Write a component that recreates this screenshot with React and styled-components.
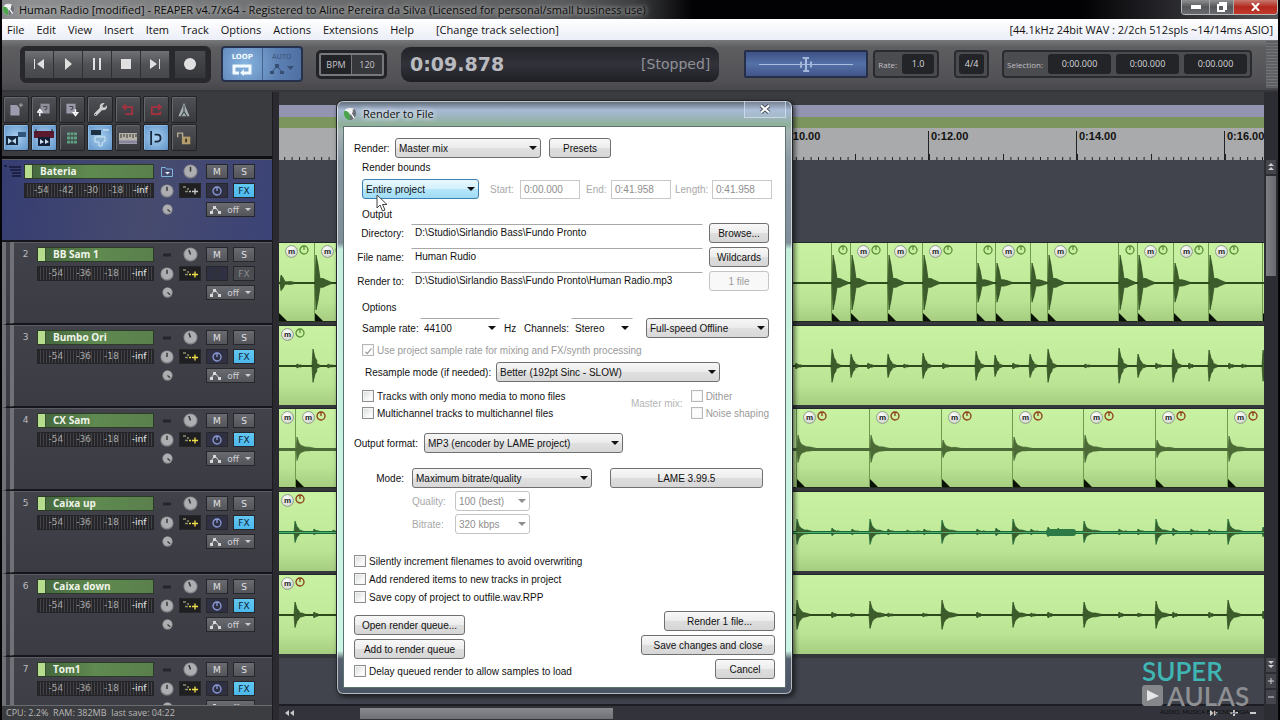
import styled, { createGlobalStyle, css } from "styled-components";
import { FaWrench } from "react-icons/fa";

const uiFont = `"Open Sans", "Noto Sans", sans-serif`;
const dialogFont = `"Liberation Sans", Arial, sans-serif`;
const meterFont = `"DejaVu Sans", sans-serif`;

const menuItems = ["File", "Edit", "View", "Insert", "Item", "Track", "Options", "Actions", "Extensions", "Help", "[Change track selection]"];

const tracks = [
  { name: "Bateria", folder: true },
  { no: 2, name: "BB Sam 1", fxOff: true },
  { no: 3, name: "Bumbo Ori" },
  { no: 4, name: "CX Sam" },
  { no: 5, name: "Caixa up" },
  { no: 6, name: "Caixa down" },
  { no: 7, name: "Tom1" },
];

const timeMarks = ["0:04.00", "0:06.00", "0:08.00", "0:10.00", "0:12.00", "0:14.00", "0:16.00"];

// clip starts, in pixels from the left of the arrange view
const kickClips = [0, 35, 552, 571, 608, 643, 697, 716, 751, 768, 839, 858, 894, 929, 983];
const snareClips = [0, 16, 517, 590, 662, 733, 804, 876, 948];

// [x, height, tail length]
const softKicks = [697, 716, 751, 894];
const kickHits = [[1, 8, 14], ...kickClips.slice(1, 14).map((x) => [x + 1, softKicks.includes(x) ? 20 : 28, 15])];
const bassHits = [
  [17, 2, 4], [33, 17, 6], [48, 2, 5], [516, 3, 6], [552, 17, 8], [571, 12, 7], [588, 3, 5], [608, 12, 8],
  [624, 2, 4], [643, 13, 8], [663, 3, 6], [696, 15, 8], [715, 11, 7], [733, 3, 6], [750, 12, 7], [768, 17, 8],
  [805, 2, 5], [839, 18, 8], [858, 12, 8], [876, 3, 6], [893, 17, 8], [909, 3, 4], [929, 16, 8], [949, 3, 5],
  [962, 2, 4], [983, 16, 5],
];
const snareHits = snareClips.slice(1).map((x, i) => [x + 1, [12, 14, 14, 9, 12, 14, 9, 13][i], 19]);
const caixaUpHits = [
  [15, 11, 8], [34, 3, 5], [53, 2, 12], [517, 13, 16], [552, 4, 8], [572, 3, 7], [590, 13, 14], [608, 3, 6],
  [627, 2, 16], [644, 3, 7], [662, 12, 16], [697, 3, 9], [716, 4, 4], [733, 13, 14], [751, 3, 8], [768, 5, 32],
  [778, 4, 20], [804, 11, 18], [839, 3, 9], [858, 3, 6], [876, 13, 14], [893, 4, 5], [911, 3, 8], [929, 3, 8],
  [948, 13, 16], [983, 5, 4],
];
const caixaDownHits = [
  [15, 13, 10], [34, 3, 3], [517, 15, 13], [552, 3, 4], [571, 2, 3], [590, 14, 16], [608, 2, 5], [643, 2, 4],
  [662, 15, 16], [697, 3, 3], [733, 13, 14], [751, 2, 4], [768, 3, 4], [804, 13, 18], [839, 3, 4], [858, 2, 3],
  [876, 14, 13], [893, 3, 4], [929, 3, 4], [948, 15, 13], [983, 4, 3],
];

const lanes = [
  { starts: kickClips, hits: kickHits, power: "#5b8f35", fades: true, sharp: true },
  { starts: [0], hits: bassHits, power: "#5b8f35" },
  { starts: snareClips, hits: snareHits, power: "#8c3c14", fades: true, soft: true },
  { starts: [0], hits: caixaUpHits, power: "#8c3c14", stroke: "#17693a", core: "#4fae6c" },
  { starts: [0], hits: caixaDownHits, power: "#8c3c14" },
];

function hitPath([x, h, tail], sharp) {
  const knee = sharp ? [0.66, 0.16] : [0.5, 0.3];
  const top = [
    [0, 0], [1, h], [3, h * knee[0]], [5, h * knee[1]], [tail * 0.4 + 2, h * 0.16], [tail * 0.6 + 2, h * 0.07 + 1], [tail + 3, 0],
  ];
  const up = top.map(([dx, dy]) => `${x + dx},${40 - dy}`);
  const down = [...top].reverse().map(([dx, dy]) => `${x + dx},${40 + dy * 0.96}`);
  return `M${up.join("L")}L${down.join("L")}Z`;
}

function Wave({ hits, sharp, soft, core, stroke = "#2c4a1c" }) {
  return (
    <WaveSvg aria-hidden="true">
      <rect x="0" y="39" width="100%" height={soft || core ? 3 : 2} fill={soft ? "#4b6a38" : stroke} />
      {hits.map((hit, idx) => (
        <path key={idx} d={hitPath(hit, sharp)} fill={soft ? "#4b6a35" : "#3d5c2c"} stroke={soft ? "#4b6a35" : stroke} strokeWidth="0.7" />
      ))}
      {core && <rect x="0" y="40" width="100%" height="1" fill={core} />}
      {core && <rect x="767" y="37" width="30" height="7" rx="3" fill="#2c7a45" />}
    </WaveSvg>
  );
}

function Power({ color }) {
  return (
    <svg width="10" height="10" viewBox="0 0 10 10" fill="none" stroke={color} strokeWidth="1.3">
      <circle cx="5" cy="5" r="4" />
      <path d="M5 1V5" />
    </svg>
  );
}

function Lane({ starts, hits, power, fades, ...wave }) {
  return (
    <LaneRow>
      {starts.map((start, idx) => {
        const width = starts[idx + 1] ? starts[idx + 1] - start : 0;
        const tiny = (width && width < 18) || start > 970;
        const narrow = width && width < 24;
        const lone = fades && idx === 0 && wave.soft;
        return (
          <Clip key={start} $width={width} $fade={fades} $first={idx === 0} $tight={lone}>
            {(lone || (!narrow && !tiny)) && <MuteBadge>m</MuteBadge>}
            {!tiny && <Power color={power} />}
          </Clip>
        );
      })}
      <Wave hits={hits} {...wave} />
    </LaneRow>
  );
}

function ReaperLogo({ size }) {
  return (
    <svg width={size} height={size} viewBox="0 0 16 16" aria-hidden="true">
      <path d="M8 1C4 1 1 3 1 7c0 5 4 8 7 8s7-3 7-8c0-4-3-6-7-6z" fill="#e8eaea" />
      <path d="M1 7c0 5 4 8 7 8V9C7 6 4 4 2 4 1 5 1 6 1 7z" fill="#4ca54e" />
      <path d="M8 15c3 0 7-3 7-8 0-2-1-4-2-5-3 2-4 5-5 8z" fill="#6d7079" />
      <path d="M3 4h6c2 0 2 2 0 3l4 6" fill="none" stroke="#fff" strokeWidth="1.4" />
    </svg>
  );
}

function Knob({ size, angle = 0 }) {
  return (
    <svg width={size} height={size} viewBox="0 0 16 16" aria-hidden="true">
      <circle cx="8" cy="8" r="7.5" fill="#85868a" />
      <circle cx="8" cy="7.6" r="6.4" fill="#adaeb1" />
      <path d="M8 3v5" stroke="#333" strokeWidth="1.6" transform={`rotate(${angle} 8 8)`} />
    </svg>
  );
}

function EnvelopeIcon() {
  return (
    <svg width="11" height="8" viewBox="0 0 11 8" fill="none" stroke="#d8d8d8" strokeWidth="1">
      <path d="M1 6L4 2H6L9 6" />
      <path d="M0 5h3v3H0zM3 0h3v3H3zM8 5h3v3H8z" fill="#d8d8d8" stroke="none" />
    </svg>
  );
}

function Track({ no, name, folder, fxOff }) {
  const marks = folder ? ["-54", "-42", "-30", "-18", "-inf"] : ["-54", "-36", "-18", "-inf"];
  return (
    <TrackRow $folder={folder}>
      <TrackNo $folder={folder}>
        {folder ? (
          <svg width="18" height="14" viewBox="0 0 18 14" fill="none" stroke="#1c2145" strokeWidth="2">
            <path d="M0 2h3M5 3h12M6 6h11M8 9h9M8 12h9" />
          </svg>
        ) : no}
      </TrackNo>
      <TrackMain>
        <TrackName>{name}</TrackName>
        <Meter $cols={marks.length}>
          {marks.map((mark) => <MeterMark key={mark} $bright={mark === "-inf"}>{mark}</MeterMark>)}
        </Meter>
      </TrackMain>
      <TrackControls>
        {folder ? (
          <svg width="14" height="12" viewBox="0 0 14 12" fill="none" stroke="#7fb4d8">
            <path d="M1.500 1.500h4l1 1.500h6v7.500h-11z" />
            <path d="M5 6h5l-2.500 2.500z" fill="#dfeefa" stroke="none" />
          </svg>
        ) : (
          <svg width="10" height="4" viewBox="0 0 10 4"><path d="M1 2h8" stroke="#26262a" strokeWidth="3" /></svg>
        )}
        <Knob size={15} angle={folder ? 0 : -20} />
        <TrackBtn>M</TrackBtn>
        <TrackBtn>S</TrackBtn>
        <Knob size={14} angle={0} />
        <TrackBtn $tone="route" aria-label="Routing">
          <svg width="17" height="9" viewBox="0 0 17 9" fill="none" stroke={folder ? "#c9c9c9" : "#f0e04a"} strokeWidth="1.300">
            <path d="M1 1h3M5 3h2M3 5.500h3" stroke="#8d8d70" />
            <path d="M7 5.500h2M10 5.500h6M13 2.500v6" />
          </svg>
        </TrackBtn>
        <TrackBtn $tone="power" aria-label="Bypass">
          {fxOff ? <Power color="#33343a" /> : <Power color="#8d9ddb" />}
        </TrackBtn>
        <TrackBtn $tone={fxOff ? "fxOff" : "fx"}>FX</TrackBtn>
        <Knob size={11} angle={130} />
        <i />
        <OffBtn>
          <EnvelopeIcon />
          off
          <Caret $small />
        </OffBtn>
      </TrackControls>
    </TrackRow>
  );
}

const toolIcons = [
  { name: "New project", art: <><path d="M2 3h9l4 4v11H2z" fill="#9c9cae" /><path d="M17 0v6M14 3h6" stroke="#ccc" /></> },
  { name: "Open project", art: <><path d="M5 1h13v14H5z" fill="#8f909c" /><path d="M9 5h5v3l-3 2" stroke="#44454d" strokeWidth="1.500" /><path d="M4 19v-6M1 13l3-4 3 4z" stroke="#fff" strokeWidth="2" /></> },
  { name: "Save project", art: <><path d="M2 1h13v14H2z" fill="#9b9aab" /><path d="M6 5h5v3l-3 2" stroke="#44454d" strokeWidth="1.500" /><path d="M15 9v6M12 14l3 4 3-4z" stroke="#fff" strokeWidth="2" /></> },
  { name: "Settings", wrench: true },
  { name: "Undo", art: <path d="M7 2L3 6l4 4M3 6h13v10H6" stroke="#a8323f" strokeWidth="2.500" /> },
  { name: "Redo", art: <path d="M13 2l4 4-4 4M17 6H4v10h12v-4" stroke="#a8323f" strokeWidth="2.500" /> },
  { name: "Metronome", art: <><path d="M10 0l8 19H2z" fill="#a5aeb1" /><path d="M10 4v8M6 19l4-7 4 7" stroke="#3e4648" strokeWidth="1.500" /></> },
  { name: "Auto crossfade", on: true, big: true, art: <><path d="M0 8h12v9H0z" fill="#16283f" /><path d="M12 4h8v5h-8z" fill="#31567d" /><path d="M2 10l4 3-4 3zM10 10l-4 3 4 3z" fill="#bcd8ee" /></> },
  { name: "Item grouping", on: true, big: true, art: <><path d="M0 3h20v7H0z" fill="#5b1a2e" /><path d="M4 9h12v9H4z" fill="#142038" /><path d="M6 11l4 3-4 2zM11 11l4 3-4 2z" fill="#cfe0f0" /><path d="M2 1v4M18 1v4" stroke="#222" /></> },
  { name: "Grid", art: <path d="M3 4h14M3 10h14M3 16h14" stroke="#5fa585" strokeWidth="4" strokeDasharray="4 1" /> },
  { name: "Ripple editing", on: true, big: true, art: <><path d="M1 2h10v5H1z" fill="#1d3145" /><path d="M13 2h6" stroke="#e6f2fc" /><path d="M5 9h10v4l-3 2v3H9v-4H5z" stroke="#cfe6f8" fill="#8bb6d6" /></> },
  { name: "Ruler", big: true, art: <><path d="M1 5h18v11H1z" fill="#b5b3a8" /><path d="M3 6v4M6 6v3M9 6v4M12 6v3M15 6v4M18 6v3" stroke="#333" /><path d="M1 14h18" stroke="#8784a0" strokeWidth="3" /></> },
  { name: "Snap", on: true, art: <path d="M3 0v20M8 5h4c6 0 6 10 0 10H8" stroke="#16283f" strokeWidth="2.500" /> },
  { name: "Lock", art: <><path d="M7 8h12v11H7z" fill="#b39b6c" /><path d="M1 9V3h7v6" stroke="#b5aa92" strokeWidth="2" /><path d="M13 11v5" stroke="#3c3220" strokeWidth="2.500" /></> },
];

function SelectBox({ id, value, ...rest }) {
  return (
    <SelectWrap {...rest}>
      <Select id={id} disabled={rest.$off} defaultValue={value} aria-label={id ? undefined : value}>
        <option>{value}</option>
      </Select>
      <Caret />
    </SelectWrap>
  );
}

function Check({ label, disabled, checked }) {
  return (
    <CheckLabel $off={disabled}>
      <CheckInput type="checkbox" disabled={disabled} defaultChecked={checked} />
      {label}
    </CheckLabel>
  );
}

function RenderDialog() {
  return (
    <DialogFrame role="dialog" aria-label="Render to File">
      <DialogTitle>
        <ReaperLogo size={14} />
        <span>Render to File</span>
        <DialogClose aria-label="Close">
          <svg width="12" height="10" viewBox="0 0 12 10" fill="none">
            <path d="M2 1.500l8 7M10 1.500l-8 7" stroke="#4a5160" strokeWidth="4" />
            <path d="M2 1.500l8 7M10 1.500l-8 7" stroke="#fff" strokeWidth="2" />
          </svg>
        </DialogClose>
      </DialogTitle>
      <DialogBody>
        <Row>
          <Label htmlFor="source" $width={41}>Render:</Label>
          <SelectBox id="source" value="Master mix" $width={146} />
          <Button $width={62} $push={8}>Presets</Button>
        </Row>
        <Group $top={2}>
          <Legend $space={3}>Render bounds</Legend>
          <Row>
            <SelectBox value="Entire project" $width={117} $hot />
            <Label htmlFor="start" $off $width={30} $push={11}>Start:</Label>
            <Input id="start" defaultValue="0:00.000" disabled $width={60} />
            <Label htmlFor="end" $off $width={25} $push={6}>End:</Label>
            <Input id="end" defaultValue="0:41.958" disabled $width={60} />
            <Label htmlFor="length" $off $width={37} $push={4}>Length:</Label>
            <Input id="length" defaultValue="0:41.958" disabled $width={60} />
          </Row>
        </Group>
        <Group $top={8}>
          <Legend>Output</Legend>
          <Rows>
            <Row>
              <Label htmlFor="dir" $end $width={42}>Directory:</Label>
              <Input id="dir" defaultValue="D:\Studio\Sirlandio Bass\Fundo Pronto" $line />
              <Button $width={60} $push={6}>Browse...</Button>
            </Row>
            <Row>
              <Label htmlFor="file" $end $width={42}>File name:</Label>
              <Input id="file" defaultValue="Human Rudio" $line />
              <Button $width={60} $push={6}>Wildcards</Button>
            </Row>
            <Row>
              <Label htmlFor="target" $end $width={42}>Render to:</Label>
              <Input id="target" defaultValue="D:\Studio\Sirlandio Bass\Fundo Pronto\Human Radio.mp3" $line />
              <Button $width={60} $push={6} disabled>1 file</Button>
            </Row>
          </Rows>
        </Group>
        <Group $top={9}>
          <Legend $space={2}>Options</Legend>
          <Rows>
            <Row>
              <Label htmlFor="rate" $width={58}>Sample rate:</Label>
              <SelectBox id="rate" value="44100" $width={80} $bare />
              <Label $width={20} $push={4}>Hz</Label>
              <Label htmlFor="channels" $width={47}>Channels:</Label>
              <SelectBox id="channels" value="Stereo" $width={62} $bare />
              <SelectBox value="Full-speed Offline" $width={123} $last />
            </Row>
            <Check label="Use project sample rate for mixing and FX/synth processing" disabled checked />
            <Row>
              <Label htmlFor="resample" $width={134} $indent={3}>Resample mode (if needed):</Label>
              <SelectBox id="resample" value="Better (192pt Sinc - SLOW)" $width={224} />
            </Row>
            <SplitRow>
              <Checks $gap={1}>
                <Check label="Tracks with only mono media to mono files" />
                <Check label="Multichannel tracks to multichannel files" />
              </Checks>
              <MasterMix>Master mix:</MasterMix>
              <Checks $gap={1}>
                <Check label="Dither" disabled />
                <Check label="Noise shaping" disabled />
              </Checks>
            </SplitRow>
          </Rows>
        </Group>
        <Row $top={12}>
          <Label htmlFor="format" $width={70}>Output format:</Label>
          <SelectBox id="format" value="MP3 (encoder by LAME project)" $width={199} />
        </Row>
        <FormatGroup>
          <Row>
            <Label htmlFor="mode" $end $width={42}>Mode:</Label>
            <SelectBox id="mode" value="Maximum bitrate/quality" $width={180} />
            <Button $width={153} $push={18}>LAME 3.99.5</Button>
          </Row>
          <Row>
            <Label htmlFor="quality" $off $width={42} $push={50}>Quality:</Label>
            <SelectBox id="quality" value="100 (best)" $width={75} $off />
          </Row>
          <Row>
            <Label htmlFor="bitrate" $off $width={42} $push={50}>Bitrate:</Label>
            <SelectBox id="bitrate" value="320 kbps" $width={75} $off />
          </Row>
        </FormatGroup>
        <Checks $gap={2} $top={19}>
          <Check label="Silently increment filenames to avoid overwriting" />
          <Check label="Add rendered items to new tracks in project" />
          <Check label="Save copy of project to outfile.wav.RPP" />
        </Checks>
        <DialogFooter>
          <Rows>
            <Button $width={111}>Open render queue...</Button>
            <Button $width={111}>Add to render queue</Button>
            <Check label="Delay queued render to allow samples to load" />
          </Rows>
          <Rows $end>
            <Button $width={111}>Render 1 file...</Button>
            <Button $width={134}>Save changes and close</Button>
            <Button $width={60}>Cancel</Button>
          </Rows>
        </DialogFooter>
      </DialogBody>
      <Cursor width="12" height="18" viewBox="0 0 12 18">
        <path d="M1 1v13l3-3 2.500 6 2.500-1-2.500-5.500H11z" fill="#fff" stroke="#444" strokeWidth="1" />
      </Cursor>
    </DialogFrame>
  );
}

function Transport() {
  return (
    <TransportBar>
      <Deck>
        <DeckBtn aria-label="Go to start"><svg width="16" height="12"><path d="M3 1h1v10H3zM13 1v10L6 6z" /></svg></DeckBtn>
        <DeckBtn aria-label="Play"><svg width="12" height="12"><path d="M3 0l7 6-7 6z" /></svg></DeckBtn>
        <DeckBtn aria-label="Pause"><svg width="12" height="12"><path d="M2 0h2v12H2zM8 0h2v12H8z" /></svg></DeckBtn>
        <DeckBtn aria-label="Stop"><svg width="12" height="12"><path d="M1 1h10v10H1z" /></svg></DeckBtn>
        <DeckBtn aria-label="Go to end"><svg width="16" height="12"><path d="M3 1l7 5-7 5zM12 1h1v10h-1z" /></svg></DeckBtn>
        <DeckBtn $record aria-label="Record"><svg width="12" height="12"><circle cx="6" cy="6" r="6" /></svg></DeckBtn>
      </Deck>
      <LoopPanel>
        <LoopBtn $on>
          LOOP
          <svg width="20" height="13" viewBox="0 0 20 13" fill="none" stroke="#f2faff" strokeWidth="3">
            <path d="M7 10H2V3h16v7h-6" /><path d="M12 6v7L8 10z" fill="#f2faff" stroke="none" />
          </svg>
        </LoopBtn>
        <LoopBtn>
          AUTO
          <svg width="24" height="12" viewBox="0 0 24 12" fill="none" stroke="#384f74">
            <path d="M2 9l5-6 5 6" /><path d="M0 8h4v3H0zM5 1h4v4H5zM10 8h4v3h-4zM17 3h7l-3.500 4z" fill="#384f74" stroke="none" />
          </svg>
        </LoopBtn>
      </LoopPanel>
      <Bpm><span>BPM</span><span>120</span></Bpm>
      <Clock><strong>0:09.878</strong><span>[Stopped]</span></Clock>
      <RateSlider type="range" aria-label="Play rate" />
      <ReadoutBox><span>Rate:</span><Readout $width={32}>1.0</Readout></ReadoutBox>
      <ReadoutBox $push={10}><Readout $width={25}>4/4</Readout></ReadoutBox>
      <ReadoutBox $push={8}>
        <span>Selection:</span>
        <Readout $width={63}>0:00.000</Readout>
        <Readout $width={63}>0:00.000</Readout>
        <Readout $width={63}>0:00.000</Readout>
      </ReadoutBox>
      <Grip />
    </TransportBar>
  );
}

function App() {
  return (
    <>
      <GlobalStyle />
      <Window>
        <TitleBar>
          <ReaperLogo size={13} />
          <TitleText>Human Radio [modified] - REAPER v4.7/x64 - Registered to Aline Pereira da Silva (Licensed for personal/small business use)</TitleText>
          <WindowButtons>
            <WinBtn $width={27} aria-label="Minimize"><svg width="10" height="4"><path d="M0 0h10v4H0z" fill="#fff" /></svg></WinBtn>
            <WinBtn $width={24} aria-label="Restore"><svg width="10" height="10" fill="none" stroke="#fff" strokeWidth="2"><path d="M3 3V1h6v6H7M1 3h6v6H1z" /></svg></WinBtn>
            <WinBtn $width={44} $close aria-label="Close"><svg width="9" height="8"><path d="M1 0l7 8M8 0L1 8" stroke="#fff" strokeWidth="2" /></svg></WinBtn>
          </WindowButtons>
        </TitleBar>
        <MenuBar>
          {menuItems.map((item) => <MenuBtn key={item} $note={item.startsWith("[")}>{item}</MenuBtn>)}
          <AudioInfo>[44.1kHz 24bit WAV : 2/2ch 512spls ~14/14ms ASIO]</AudioInfo>
        </MenuBar>
        <Transport />
        <Workspace>
          <Side>
            <Toolbar>
              {toolIcons.map(({ name, on, big, wrench, art }) => (
                <ToolBtn key={name} $on={on} aria-label={name}>
                  {wrench
                    ? <FaWrench size={13} color="#cfcfcf" />
                    : <svg width={big ? 20 : 14} height={big ? 20 : 14} viewBox="0 0 20 20" fill="none">{art}</svg>}
                </ToolBtn>
              ))}
            </Toolbar>
            <TrackList>
              {tracks.map((track) => <Track key={track.name} {...track} />)}
            </TrackList>
            <Status>CPU: 2.2%&nbsp; RAM: 382MB&nbsp; last save: 04:22</Status>
          </Side>
          <Arrange>
            <MarkerLane />
            <RegionLane />
            <Ruler>
              {["", ...timeMarks].map((mark) => (
                <RulerMark key={mark} $first={!mark}>
                  <span>{mark}</span>
                  <svg width="148" height="6">
                    {Array.from({ length: 20 }, (_, i) => (
                      <path key={i} d={`M${i * 7.4 + 0.5} ${i % 10 === 0 ? 0 : 3}V6`} stroke="#222" />
                    ))}
                  </svg>
                </RulerMark>
              ))}
            </Ruler>
            <Lanes>
              <EmptyLane />
              {lanes.map((lane, idx) => <Lane key={idx} {...lane} />)}
            </Lanes>
            <ScrollX>
              <svg width="9" height="6" fill="#c9c9cc"><path d="M4 0v6L0 3zM9 0v6L5 3z" /></svg>
              <ScrollThumbX />
              <svg width="48" height="8" viewBox="0 0 48 8" fill="#c9c9cc">
                <path d="M0 1l4 3-4 3zM4 1l4 3-4 3zM20 3h3V1h2v2h3v2h-3v2h-2V5h-3zM40 3h6v2h-6z" />
              </svg>
            </ScrollX>
            <Watermark>
              <b>SUPER</b>
              <div>
                <svg width="21" height="21" viewBox="0 0 21 21"><rect width="21" height="21" rx="3" fill="#85878b" /><path d="M5 5l12 6-12 5z" fill="#e6e6e6" /></svg>
                <strong>AULAS</strong>
              </div>
              <small>AUDIO, MUSICA E TECNOLOGIA</small>
            </Watermark>
          </Arrange>
          <ScrollY>
            <ScrollBtn aria-label="Scroll up"><svg width="6" height="8" fill="#cfcfd2"><path d="M3 0l3 3H0zM3 4l3 3H0z" /></svg></ScrollBtn>
            <ScrollThumbY />
            <ScrollBtn $bottom aria-label="Scroll down"><svg width="6" height="8" fill="#cfcfd2"><path d="M0 0h6L3 3zM0 4h6L3 7z" /></svg></ScrollBtn>
            <ScrollBtn aria-label="Zoom in"><svg width="6" height="6" stroke="#cfcfd2"><path d="M0 3h6M3 0v6" /></svg></ScrollBtn>
            <ScrollBtn aria-label="Zoom out"><svg width="6" height="6" stroke="#cfcfd2"><path d="M0 3h6" /></svg></ScrollBtn>
          </ScrollY>
        </Workspace>
        <RenderDialog />
      </Window>
    </>
  );
}

export default App;

const GlobalStyle = createGlobalStyle`
  *, *::before, *::after {
    box-sizing:border-box;
  }
  body {
    margin:0;
    background:#000;
  }
  button, input, select {
    margin:0;
    padding:0;
    border:0;
    font:inherit;
    color:inherit;
  }
  svg {
    flex:none;
  }
`;

const Window = styled.div`
  display:flex;
  flex-direction:column;
  position:relative;
  height:100vh;
  min-height:700px;
  padding:0 2px 0 2px;
  overflow:hidden;
  background:#050507;
  font-family:${uiFont};
  font-size:11px;
`;

const TitleBar = styled.header`
  display:flex;
  align-items:center;
  height:19px;
  background:linear-gradient(90deg, #88898a 0, #8e8f90 30px, #6f7071 260px, #5a5b5c 560px, #404142 630px, #020205 690px, #020205 1080px, #55565a 100%);
`;
const TitleText = styled.h1`
  margin:0 0 0 4px;
  font-size:11px;
  font-weight:400;
  white-space:nowrap;
  color:#0a0a0a;
  text-shadow:0 0 6px #c8c8c8, 0 0 4px #aaa;
`;
const WindowButtons = styled.div`
  display:flex;
  align-self:flex-start;
  margin-left:auto;
  border:1px solid #bbb;
  border-top:0;
  border-radius:0 0 4px 4px;
  overflow:hidden;
`;
const WinBtn = styled.button`
  display:flex;
  justify-content:center;
  align-items:center;
  width:${({ $width }) => $width}px;
  height:14px;
  background:${({ $close }) => ($close ? "linear-gradient(#c77a70, #b3281e 50%, #c23a2c)" : "linear-gradient(#8f9091, #55565a 50%, #6b6c70)")};
  & + & {
    border-left:1px solid #aaa;
  }
`;

const MenuBar = styled.nav`
  display:flex;
  align-items:center;
  gap:12px;
  height:21px;
  padding:0 5px;
  background:linear-gradient(#fff, #eceef8);
  color:#111;
`;
const MenuBtn = styled.button`
  margin-left:${({ $note }) => ($note ? 10 : 0)}px;
  background:none;
  white-space:nowrap;
`;
const AudioInfo = styled.span`
  margin-left:auto;
  white-space:nowrap;
`;

const TransportBar = styled.div`
  display:flex;
  align-items:center;
  height:52px;
  padding:0 0 2px 18px;
  border-bottom:2px solid #36363a;
  background:linear-gradient(#77787a, #5e5e61 15%, #525256 80%, #48484c);
`;
const inset = css`
  border:2px solid #2a2b2f;
  border-radius:4px;
  background:#4b4c50;
`;
const Deck = styled.div`
  display:flex;
  height:37px;
  padding:3px;
  border:2px solid #28292d;
  border-radius:6px;
  background:#28292d;
`;
const DeckBtn = styled.button`
  display:flex;
  justify-content:center;
  align-items:center;
  width:${({ $record }) => ($record ? 31 : 29)}px;
  margin-left:${({ $record }) => ($record ? 5 : 0)}px;
  border-right:1px solid #303135;
  background:${({ $record }) => ($record ? "linear-gradient(#4a4b4f, #36373b)" : "linear-gradient(#707175, #515256 50%, #46474b)")};
  svg {
    fill:#e0e0e0;
  }
`;
const LoopPanel = styled.div`
  display:flex;
  width:82px;
  height:36px;
  margin-left:10px;
  border:2px solid #26324c;
  border-radius:4px;
  background:radial-gradient(circle at 28% 50%, #86b4e0, #5b7fb2 60%, #4e6fa2);
`;
const LoopBtn = styled.button`
  display:flex;
  flex:1;
  flex-direction:column;
  align-items:center;
  justify-content:center;
  gap:2px;
  background:none;
  border-left:${({ $on }) => ($on ? 0 : "1px solid #46618e")};
  font:${({ $on }) => ($on ? "bold " : "")}7px ${meterFont};
  color:${({ $on }) => ($on ? "#f2faff" : "#3c5276")};
`;
const Bpm = styled.div`
  display:flex;
  width:71px;
  height:29px;
  margin-left:13px;
  padding:2px;
  border:3px solid #222327;
  border-radius:5px;
  background:#77787b;
  font:9px ${uiFont};
  color:#c5c5c8;
  span {
    flex:1;
    background:#222327;
    text-align:center;
    line-height:19px;
  }
  span + span {
    margin-left:1px;
    background:#36373b;
  }
`;
const Clock = styled.div`
  display:flex;
  flex:1;
  justify-content:space-between;
  align-items:center;
  max-width:460px;
  height:35px;
  margin-left:14px;
  padding:0 9px;
  border-radius:9px;
  background:linear-gradient(#222329, #32333a 50%, #1e1f25);
  font-family:${meterFont};
  font-size:14px;
  color:#8f9096;
  strong {
    font-size:19px;
    color:#b9babf;
  }
`;
const RateSlider = styled.input`
  appearance:none;
  width:124px;
  height:28px;
  margin-left:25px;
  border:2px solid #262f49;
  border-radius:2px;
  background:
    linear-gradient(#a9bde0, #a9bde0) center / 94px 1px no-repeat,
    linear-gradient(#3e5286, #5471a8 50%, #42558a);
  &::-webkit-slider-thumb {
    appearance:none;
    width:12px;
    height:15px;
    border:2px dashed #a3b6d8;
    border-radius:3px;
    background:linear-gradient(90deg, transparent 3px, #a9bde0 3px, #a9bde0 5px, transparent 5px);
  }
`;
const ReadoutBox = styled.div`
  ${inset}
  display:flex;
  align-items:center;
  gap:5px;
  height:28px;
  margin-left:${({ $push = 0 }) => $push + 5}px;
  padding:0 3px;
  white-space:nowrap;
  font:8px ${uiFont};
  color:#c0c0c4;
`;
const Readout = styled.span`
  width:${({ $width }) => $width}px;
  border-radius:3px;
  background:#232428;
  font:9px/20px ${uiFont};
  text-align:center;
  color:#d8d8da;
`;
const Grip = styled.div`
  align-self:stretch;
  width:12px;
  margin-left:14px;
  background:repeating-linear-gradient(#727376 0 1px, #5f6063 1px 3px);
`;

const Workspace = styled.main`
  display:flex;
  flex:1;
  min-height:0;
`;
const Side = styled.aside`
  display:flex;
  flex:none;
  flex-direction:column;
  width:271px;
  border-right:1px solid #1b1b20;
  background:#3a3b3f;
`;
const Toolbar = styled.div`
  display:grid;
  grid-template-columns:repeat(7, 26px);
  grid-auto-rows:27px;
  gap:1px 2px;
  flex:none;
  height:67px;
  padding:4px 0 0 1px;
  border-bottom:3px solid #0f0f13;
`;
const ToolBtn = styled.button`
  display:flex;
  justify-content:center;
  align-items:center;
  border:1px solid #232327;
  border-radius:2px;
  background:${({ $on }) => ($on ? "radial-gradient(#a9d0f0, #5f93c8)" : "linear-gradient(#505156, #38393d)")};
  box-shadow:inset 1px 1px 0 ${({ $on }) => ($on ? "#8dbbe4" : "#66676b")};
`;
const TrackList = styled.div`
  flex:1;
  min-height:0;
  overflow:hidden;
  background:#1c1c22;
`;
const TrackRow = styled.section`
  display:flex;
  height:83px;
  padding-top:5px;
  padding-right:17px;
  border-bottom:2px solid #15151b;
  background:linear-gradient(#42434a, #3b3c43);
  box-shadow:inset 0 1px 0 #5b5c63;
  border-left:12px double #707176;
  ${({ $folder }) => $folder && css`
    border-left:0;
    background:linear-gradient(100deg, #363d72, #464b6e 55%, #3b4377);
  `}
`;
const TrackNo = styled.span`
  width:${({ $folder }) => ($folder ? 22 : 23)}px;
  flex:none;
  text-align:center;
  font:9px/14px ${meterFont};
  color:#bcbcc0;
`;
const TrackMain = styled.div`
  flex:1;
`;
const TrackName = styled.div`
  height:15px;
  padding-left:15px;
  border:1px solid #2c3a28;
  background:linear-gradient(90deg, #b6dd8e 7px, #2c3a28 7px, #46693f 8px, #5f8a50 50%, #5a7f4c);
  font:bold 10px/13px ${uiFont};
  color:#f0f5ea;
`;
const Meter = styled.div`
  display:grid;
  grid-template-columns:repeat(${({ $cols }) => $cols}, 1fr);
  height:15px;
  margin-top:4px;
  padding-left:4px;
  border:1px solid #232328;
  background:repeating-linear-gradient(90deg, #26262a 0 2px, #434448 2px 3px);
  text-align:center;
  font:9px/13px ${meterFont};
`;
const MeterMark = styled.span`
  color:${({ $bright }) => ($bright ? "#e8e8e8" : "#a6a6a6")};
`;
const TrackControls = styled.div`
  display:grid;
  grid-template-columns:14px repeat(3, 22px);
  grid-auto-rows:15px;
  gap:4px 5px;
  align-items:center;
  justify-items:center;
  margin-left:6px;
`;
const tones = {
  fx: css`background:linear-gradient(#62c8f2, #4cb8ec); color:#123;`,
  fxOff: css`background:#4b4c51; color:#8b8c90;`,
  route: css`background:#1f1f22;`,
  power: css`background:#2f3042;`,
};
const TrackBtn = styled.button`
  display:flex;
  justify-content:center;
  align-items:center;
  width:22px;
  height:15px;
  border:1px solid #26272b;
  background:linear-gradient(#6a6b71, #54555b);
  font:9px ${meterFont};
  color:#e0e0e2;
  ${({ $tone }) => tones[$tone]}
`;
const OffBtn = styled(TrackBtn)`
  grid-column:span 2;
  width:49px;
  gap:6px;
  color:#cfcfd2;
`;
const Status = styled.footer`
  height:15px;
  padding-left:4px;
  border-top:1px solid #6b6c70;
  background:#3c3d40;
  font:9px/13px ${uiFont};
  white-space:nowrap;
  color:#b8b8ba;
`;

const Caret = styled.i`
  border:${({ $small }) => ($small ? 3 : 4)}px solid transparent;
  border-top-color:currentColor;
  border-bottom:0;
`;

const Arrange = styled.div`
  display:flex;
  flex:1;
  flex-direction:column;
  position:relative;
  min-width:0;
  padding-top:13px;
  border-left:6px solid #2a2a30;
  background:#3b3c3f;
`;
const MarkerLane = styled.div`
  flex:none;
  height:12px;
  background:#9294b0;
`;
const RegionLane = styled.div`
  flex:none;
  height:11px;
  background:#7c955e;
`;
const Ruler = styled.div`
  display:flex;
  flex:none;
  height:32px;
  overflow:hidden;
  background:#a9aaac;
  font:bold 11px ${dialogFont};
  color:#111;
`;
const RulerMark = styled.div`
  display:flex;
  flex:none;
  flex-direction:column;
  justify-content:space-between;
  align-items:${({ $first }) => ($first ? "flex-end" : "stretch")};
  width:${({ $first }) => ($first ? 57 : 148)}px;
  margin-top:3px;
  overflow:hidden;
  border-left:${({ $first }) => ($first ? "0" : "1px solid #222")};
  span {
    padding-left:2px;
    line-height:10px;
  }
`;
const Lanes = styled.div`
  flex:1;
  min-height:0;
  overflow:hidden;
  background:#41444d;
`;
const EmptyLane = styled.div`
  height:83px;
`;
const LaneRow = styled.div`
  display:flex;
  position:relative;
  height:83px;
  border-bottom:4px solid #34383a;
  box-shadow:0 -1px 0 #25282a;
`;
const Clip = styled.div`
  display:flex;
  align-items:flex-start;
  gap:1px;
  flex:${({ $width }) => ($width ? `0 0 ${$width}px` : "1")};
  position:relative;
  padding:2px 0 0 ${({ $fade, $tight }) => ($fade && !$tight ? 6 : 2)}px;
  overflow:hidden;
  border-left:${({ $fade, $first }) => ($fade && !$first ? "1px solid #6f9a50" : "0")};
  border-bottom:${({ $fade }) => ($fade ? "1px solid #222b1a" : "0")};
  background:linear-gradient(#c8f2a2, #c2eb9c 45%, #bae394 75%, #a6cd80);
  ${({ $fade, $tight }) => $fade && !$tight && css`
    &::after {
      position:absolute;
      left:0;
      bottom:0;
      border:4px solid transparent;
      border-left-color:#0a1206;
      border-bottom-color:#0a1206;
      content:"";
    }
  `}
`;
const MuteBadge = styled.span`
  flex:none;
  width:13px;
  height:13px;
  border:1px solid #93a089;
  border-radius:50%;
  background:radial-gradient(circle at 40% 30%, #fff, #d6dbd2 70%, #a9b3a2);
  font:bold 8px/11px ${dialogFont};
  text-align:center;
  color:#222;
`;
const WaveSvg = styled.svg`
  position:absolute;
  top:0;
  left:0;
  width:100%;
  height:79px;
`;
const ScrollX = styled.div`
  display:flex;
  flex:none;
  align-items:center;
  gap:66px;
  height:16px;
  padding:0 6px;
  border-top:2px solid #1d1d24;
  background:#33343b;
`;
const ScrollThumbX = styled.div`
  width:253px;
  height:11px;
  margin-right:auto;
  background:linear-gradient(#8a8b90, #6f7075);
`;
const Watermark = styled.div`
  position:absolute;
  right:12px;
  bottom:4px;
  width:110px;
  font-family:Lato, sans-serif;
  line-height:1;
  b {
    display:block;
    font-size:26px;
    font-weight:600;
    line-height:25px;
    color:#3fb6b4;
  }
  div {
    display:flex;
    align-items:center;
    gap:4px;
    height:23px;
  }
  strong {
    font-size:26px;
    font-weight:600;
    color:#8d8f93;
  }
  small {
    display:block;
    padding-left:18px;
    font:6px/9px Lato, ${dialogFont};
    white-space:nowrap;
    color:#0a0a10;
  }
`;
const ScrollY = styled.div`
  display:flex;
  flex-direction:column;
  width:14px;
  gap:2px;
  padding:68px 2px 16px;
  background:#2c2d33;
`;
const ScrollBtn = styled.button`
  display:flex;
  justify-content:center;
  align-items:center;
  height:14px;
  margin-top:${({ $bottom }) => ($bottom ? "auto" : 0)};
  background:#44454c;
`;
const ScrollThumbY = styled.div`
  height:100px;
  background:linear-gradient(90deg, #7d7e83, #696a6f);
`;

const DialogFrame = styled.div`
  display:flex;
  flex-direction:column;
  position:absolute;
  top:100px;
  left:336px;
  width:457px;
  padding:0 6px 6px;
  border:1px solid #20262c;
  border-radius:7px;
  background:linear-gradient(#5b6470 0, #a7bad4 9px, #9fb5c4 14px, #8fb199 24px, #a5b3b4 30px, #8a98a3 60px, #7f8d98 142px, #c5eedd 148px, #cdf5e5 550px, #56606f 558px, #4b5464 100%);
  box-shadow:inset 0 0 0 1px rgba(255,255,255,.6), 2px 2px 5px rgba(0,0,0,.6);
  font-family:${dialogFont};
  font-size:10px;
  color:#111;
`;
const DialogTitle = styled.div`
  display:flex;
  align-items:center;
  gap:6px;
  height:25px;
  font:11px ${uiFont};
  text-shadow:0 0 6px #fff, 0 0 6px #fff;
`;
const DialogClose = styled.button`
  display:flex;
  justify-content:center;
  align-items:center;
  align-self:flex-start;
  width:42px;
  height:17px;
  margin-left:auto;
  border:1px solid rgba(225,235,250,.6);
  border-top:0;
  background:rgba(200,215,240,.2);
`;
const DialogBody = styled.div`
  display:flex;
  flex-direction:column;
  padding:11px 10px 8px;
  border:1px solid #5d7270;
  background:#fff;
`;
const Row = styled.div`
  display:flex;
  align-items:center;
  height:20px;
  margin-top:${({ $top = 0 }) => $top}px;
`;
const Rows = styled.div`
  display:flex;
  flex-direction:column;
  align-items:${({ $end }) => ($end ? "flex-end" : "stretch")};
  gap:4px;
`;
const Group = styled.fieldset`
  min-width:0;
  margin:${({ $top }) => $top}px 0 0;
  padding:0 6px 0 8px;
  border:0;
`;
const Legend = styled.div`
  padding-bottom:${({ $space = 0 }) => $space}px;
  line-height:16px;
`;
const Label = styled.label`
  flex:none;
  display:flex;
  justify-content:${({ $end }) => ($end ? "flex-end" : "flex-start")};
  width:${({ $width }) => $width}px;
  margin-left:${({ $push = 0 }) => $push}px;
  padding-left:${({ $indent = 0 }) => $indent}px;
  white-space:nowrap;
  color:${({ $off }) => ($off ? "#a9a9a9" : "#111")};
`;
const Button = styled.button`
  flex:none;
  width:${({ $width }) => $width}px;
  height:20px;
  margin-left:${({ $push = 0 }) => $push}px;
  border:1px solid #707070;
  border-radius:3px;
  background:linear-gradient(#f8f8f8, #ececec 50%, #dedede 50%, #d6d6d6);
  white-space:nowrap;
  &:disabled {
    border-color:#c4c4c4;
    background:#f8f8f8;
    color:#9c9c9c;
  }
`;
const Input = styled.input`
  flex:${({ $width }) => ($width ? "none" : "1")};
  width:${({ $width }) => $width}px;
  min-width:0;
  height:19px;
  padding:0 3px;
  border:1px solid #c8c8c8;
  background:#fff;
  ${({ $line }) => $line && css`
    margin-left:7px;
    padding:0 3px 2px;
    border-color:#a8a8a8 transparent transparent;
  `}
  &:disabled {
    color:#8e8e8e;
  }
`;
const SelectWrap = styled.span`
  display:flex;
  flex:none;
  align-items:center;
  position:relative;
  width:${({ $width }) => $width}px;
  height:20px;
  margin-left:${({ $last }) => ($last ? "auto" : 0)};
  border:1px solid #707070;
  border-radius:3px;
  background:linear-gradient(#f6f6f6, #ebebeb 50%, #e0e0e0 50%, #d8d8d8);
  ${({ $hot }) => $hot && css`
    border-color:#3c7fb1;
    background:linear-gradient(#eaf8fe, #d2f0fc 50%, #b6e6fa 50%, #9fdcf5);
  `}
  ${({ $bare }) => $bare && css`
    border-color:#a8a8a8 transparent transparent;
    border-radius:0;
    background:#fff;
  `}
  ${({ $off }) => $off && css`
    border-color:#c4c4c4;
    background:#fff;
    color:#8e8e8e;
  `}
  ${Caret} {
    position:absolute;
    right:3px;
    pointer-events:none;
  }
`;
const Select = styled.select`
  appearance:none;
  width:100%;
  height:18px;
  padding:0 12px 0 3px;
  background:none;
  opacity:1;
`;
const CheckLabel = styled.label`
  display:flex;
  align-items:center;
  gap:3px;
  height:16px;
  white-space:nowrap;
  color:${({ $off }) => ($off ? "#9a9a9a" : "#111")};
`;
const CheckInput = styled.input`
  appearance:none;
  display:grid;
  place-items:center;
  width:12px;
  height:12px;
  border:1px solid #8e8f8f;
  background:linear-gradient(135deg, #d6d9dc, #fbfbfb 70%);
  box-shadow:inset 0 0 0 1px #f4f4f4;
  &:disabled {
    border-color:#b8b8b8;
    background:#fcfcfc;
  }
  &:checked::before {
    width:3px;
    height:7px;
    border:solid #8a8a8a;
    border-width:0 1px 1px 0;
    transform:rotate(40deg);
    content:"";
  }
`;
const Checks = styled.div`
  display:flex;
  flex-direction:column;
  gap:${({ $gap }) => $gap}px;
  margin-top:${({ $top = 0 }) => $top}px;
`;
const SplitRow = styled.div`
  display:flex;
  align-items:center;
  padding:2px 0 0;
`;
const MasterMix = styled.span`
  margin:0 8px 2px auto;
  color:#b4b4b4;
`;
const FormatGroup = styled.div`
  display:flex;
  flex-direction:column;
  gap:3px;
  margin-top:15px;
  padding-left:8px;
  ${Label} + ${SelectWrap} {
    margin-left:1px;
  }
  ${Row}:first-child ${SelectWrap} {
    margin-left:8px;
  }
`;
const DialogFooter = styled.div`
  display:flex;
  justify-content:space-between;
  align-items:flex-end;
  margin-top:6px;
`;
const Cursor = styled.svg`
  position:absolute;
  top:93px;
  left:39px;
`;
